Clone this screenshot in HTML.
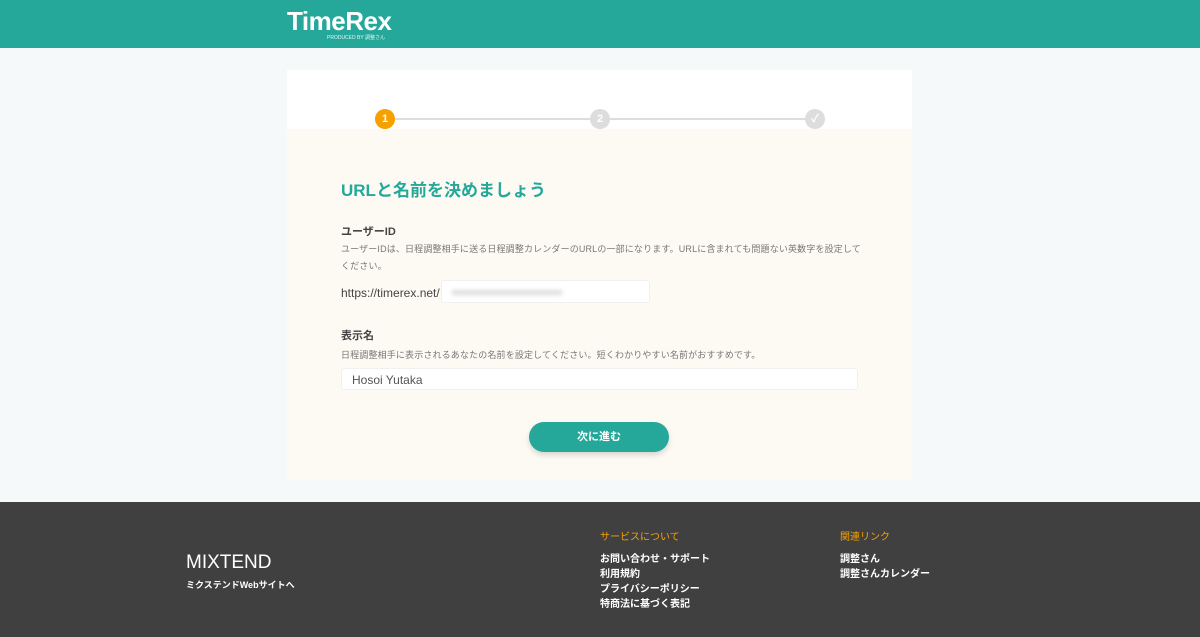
<!DOCTYPE html>
<html><head><meta charset="utf-8"><style>
*{margin:0;padding:0;box-sizing:border-box}
body{width:1200px;height:637px;overflow:hidden;background:#f6f9fa;font-family:"Liberation Sans","Noto Sans CJK JP",sans-serif;position:relative}
.hd{position:absolute;left:0;top:0;width:1200px;height:48px;background:#25a89a}
.logo{position:absolute;left:287px;top:6px;color:#fff;font-weight:bold;font-size:26px;letter-spacing:-0.5px}
.prod{position:absolute;left:327px;top:34px;color:#e6f6f4;font-size:5px}
.card{position:absolute;left:287px;top:70px;width:625px;height:410px;background:#fdfaf3}
.ctop{position:absolute;left:0;top:0;width:625px;height:59px;background:#fff}
.line{position:absolute;top:118px;height:2px;background:#ddd}
.dot{position:absolute;top:109px;width:20px;height:20px;border-radius:50%;background:#ddd;color:#fff;font-size:11px;font-weight:bold;text-align:center;line-height:20px}
.t{position:absolute;color:#444}
.in{position:absolute;background:#fff;border:1px solid #eef0f2;border-radius:3px}
.btn{position:absolute;left:529px;top:422px;width:140px;height:30px;border-radius:15px;background:#25a89a;color:#fff;font-size:11px;font-weight:bold;text-align:center;line-height:30px;box-shadow:0 3px 6px rgba(0,0,0,.15)}
.ft{position:absolute;left:0;top:502px;width:1200px;height:135px;background:#404040;color:#fff}
.ft div{position:absolute;font-size:11px}
</style></head><body>
<div class="hd"><div class="logo">TimeRex</div><div class="prod">PRODUCED BY 調整さん</div></div>
<div class="card"><div class="ctop"></div></div>
<div class="line" style="left:385px;width:430px"></div>
<div class="dot" style="left:375px;background:#f7a100">1</div>
<div class="dot" style="left:590px">2</div>
<div class="dot" style="left:805px">✓</div>
<div class="t" style="left:341px;top:176px;font-size:17px;color:#25a89a;font-weight:bold">URLと名前を決めましょう</div>
<div class="t" style="left:341px;top:223px;font-size:11px;font-weight:bold">ユーザーID</div>
<div class="t" style="left:341px;top:241px;font-size:9px;color:#777;width:525px;line-height:17px;letter-spacing:0.15px">ユーザーIDは、日程調整相手に送る日程調整カレンダーのURLの一部になります。URLに含まれても問題ない英数字を設定してください。</div>
<div class="t" style="left:341px;top:286px;font-size:12px">https://timerex.net/</div>
<div class="in" style="left:441px;top:280px;width:209px;height:23px"><div style="position:absolute;left:10px;top:9px;width:110px;height:5px;background:#ddd;filter:blur(2px)"></div></div>
<div class="t" style="left:341px;top:327px;font-size:11px;font-weight:bold">表示名</div>
<div class="t" style="left:341px;top:348px;font-size:9px;color:#777;letter-spacing:0.15px">日程調整相手に表示されるあなたの名前を設定してください。短くわかりやすい名前がおすすめです。</div>
<div class="in" style="left:341px;top:368px;width:517px;height:22px"><span style="position:absolute;left:10px;top:4px;font-size:12px;color:#555">Hosoi Yutaka</span></div>
<div class="btn">次に進む</div>
<div class="ft">
<div style="left:186px;top:50px;font-size:19px">MIXTEND</div>
<div style="left:186px;top:76px;font-size:9px;font-weight:bold">ミクステンドWebサイトへ</div>
<div style="left:600px;top:26px;color:#f7a100;font-size:10px">サービスについて</div>
<div style="left:600px;top:50px;font-size:10px;line-height:15px;font-weight:bold">お問い合わせ・サポート<br>利用規約<br>プライバシーポリシー<br>特商法に基づく表記</div>
<div style="left:840px;top:26px;color:#f7a100;font-size:10px">関連リンク</div>
<div style="left:840px;top:50px;font-size:10px;line-height:15px;font-weight:bold">調整さん<br>調整さんカレンダー</div>
</div>
</body></html>
